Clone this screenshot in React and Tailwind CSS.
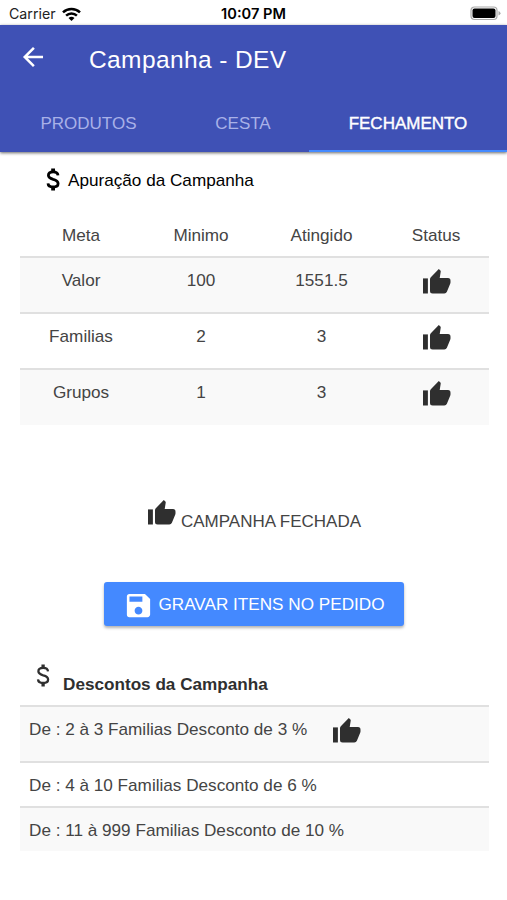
import { IoMdArrowBack } from "react-icons/io";
import { MdSave } from "react-icons/md";

const tabs = [
  { label: "PRODUTOS", cls: "w-[177px] text-[#a9b1e8]" },
  { label: "CESTA", cls: "w-[132px] text-[#a9b1e8]" },
  { label: "FECHAMENTO", cls: "w-[198px] text-white border-[#448aff]", active: true },
];

const metas = [
  { meta: "Valor", minimo: "100", atingido: "1551.5" },
  { meta: "Familias", minimo: "2", atingido: "3" },
  { meta: "Grupos", minimo: "1", atingido: "3" },
];

const descontos = [
  { text: "De : 2 à 3 Familias Desconto de 3 %", ok: true },
  { text: "De : 4 à 10 Familias Desconto de 6 %" },
  { text: "De : 11 à 999 Familias Desconto de 10 %" },
];

function ThumbUp({ className = "" }) {
  return (
    <svg className={`w-[28px] h-[25px] shrink-0 text-[#2f2f2f] ${className}`} viewBox="0 0 28 25" fill="currentColor">
      <path d="M0 9.4h4.9v15.1H0z" />
      <path d="M15.8 0.1 17.4 1.5Q17.9 2 17.7 2.8L16.7 9.1H25Q27.5 9.1 27.5 11.7V13.3Q27.5 14 27.2 14.7L23.9 22.7Q23.2 24.5 21.3 24.5H9.6Q7 24.5 7 22V10.3Q7 9.1 7.8 8.2z" />
    </svg>
  );
}

function Dollar({ weight, className = "" }) {
  return (
    <svg className={`w-[14px] h-[23px] shrink-0 ${className}`} viewBox="0 0 14 23" fill="none" stroke="currentColor" strokeWidth={weight}>
      <path d="M12 7.3C11.7 4.9 9.9 3.9 7.2 3.9C4.4 3.9 2.4 5.1 2.4 7.3C2.4 9.6 4.3 10.5 7.2 11.3C10.4 12.1 12.1 13.2 12.1 15.5C12.1 17.8 10.1 19 7.2 19C4.1 19 2.2 17.9 2 15.4" />
      <path d="M7.1 0.4V4M7.1 19v3.6" strokeWidth={weight + 1} />
    </svg>
  );
}

function StatusBar() {
  return (
    <div className="h-[25px] grid grid-cols-3 items-center pl-[9px] pr-[6px] pt-[2px] text-[#222] font-['Inter','Liberation_Sans',sans-serif]">
      <div className="flex items-center gap-[6px]">
        <span className="text-[14.2px]">Carrier</span>
        <svg width="19" height="15" viewBox="0 0 19 15" fill="none" stroke="#000" strokeWidth="2.5">
          <path d="M1 5.3a12.3 12.3 0 0 1 17 0" />
          <path d="M4.1 8.6a7.8 7.8 0 0 1 10.8 0" />
          <path d="M6.5 11.1a4.3 4.3 0 0 1 6 0L9.5 14z" fill="#000" stroke="none" />
        </svg>
      </div>
      <span className="-ml-[3px] text-center font-semibold text-[14.6px] text-black whitespace-nowrap">10:07 PM</span>
      <svg className="justify-self-end mb-[2px]" width="31" height="15" viewBox="0 0 31 15">
        <rect x="1" y="1" width="26" height="12.5" rx="3.5" fill="#fff" stroke="#aaa" strokeWidth="1.2" />
        <rect x="2.5" y="2.5" width="23" height="9.5" rx="2" fill="#000" />
        <path d="M28.5 5v4.5q2-.7 2-2.25T28.5 5z" fill="#aaa" />
      </svg>
    </div>
  );
}

function Header() {
  return (
    <header className="h-[127px] bg-[#3f51b5] text-white flex flex-col shadow-[0_1px_3px_rgba(0,0,0,0.6)]">
      <div className="h-[70px] flex items-center pl-[18px]">
        <IoMdArrowBack className="w-[30px] h-[30px] mb-[6px]" />
        <h1 className="ml-[41px] text-[24.5px] tracking-[0.4px]">Campanha - DEV</h1>
      </div>
      <nav className="flex flex-1">
        {tabs.map((tab) => (
          <div key={tab.label} className={`flex items-center justify-center pt-[2px] text-[17px] border-b-[2px] ${tab.active ? "[-webkit-text-stroke:0.4px_white]" : "border-transparent"} ${tab.cls}`}>
            {tab.label}
          </div>
        ))}
      </nav>
    </header>
  );
}

export default function App() {
  return (
    <div className="w-[507px] h-[900px] bg-white overflow-hidden text-[17.15px] leading-[24px] text-[#444] font-['Liberation_Sans',Arial,sans-serif]">
      <StatusBar />
      <Header />

      <main className="pl-[20px] pr-[18px]">
        <div className="flex items-center h-[55px] pl-[26px] text-black">
          <Dollar weight={2.8} />
          <span className="pl-[8px]">Apuração da Campanha</span>
        </div>

        <table className="w-[469px] table-fixed text-center">
          <colgroup>
            <col className="w-[122px]" />
            <col className="w-[118px]" />
            <col className="w-[123px]" />
            <col className="w-[106px]" />
          </colgroup>
          <thead>
            <tr className="h-[50px]">
              {["Meta", "Minimo", "Atingido", "Status"].map((h) => (
                <th key={h} className="font-normal pt-[7px]">{h}</th>
              ))}
            </tr>
          </thead>
          <tbody>
            {metas.map((row) => (
              <tr key={row.meta} className="h-[56px] border-t-2 border-[#e0e0e0] odd:bg-[#f9f9f9] align-top">
                <td className="pt-[10px]">{row.meta}</td>
                <td className="pt-[10px]">{row.minimo}</td>
                <td className="pt-[10px]">{row.atingido}</td>
                <td className="pt-[11px] pl-[1px]">
                  <ThumbUp className="mx-auto" />
                </td>
              </tr>
            ))}
          </tbody>
        </table>

        <div className="mt-[74px] flex justify-center items-start gap-[5px]">
          <ThumbUp className="mt-[1px]" />
          <span className="pt-[11px] text-[17px]">CAMPANHA FECHADA</span>
        </div>

        <button className="mt-[48px] ml-[84px] w-[300px] h-[44px] flex items-center justify-center gap-[4px] rounded-[3px] bg-[#4489ff] text-white shadow-[0_2px_3px_rgba(0,0,0,0.3)]">
          <MdSave className="w-[31px] h-[31px] mt-[2px]" />
          <span>GRAVAR ITENS NO PEDIDO</span>
        </button>

        <section className="mt-[33px]">
          <div className="flex items-start h-[46px] pl-[16px] text-[#2f2f2f]">
            <Dollar weight={2.3} className="mt-[5px]" />
            <h2 className="pl-[13px] pt-[13px] font-bold">Descontos da Campanha</h2>
          </div>
          {descontos.map((d) => (
            <div key={d.text} className={`flex items-start pl-[9px] pt-[10px] border-t-2 border-[#e0e0e0] even:bg-[#f9f9f9] ${d.ok ? "h-[56px]" : "h-[45px]"}`}>
              <span>{d.text}</span>
              {d.ok && <ThumbUp className="ml-[26px] mt-[1px]" />}
            </div>
          ))}
        </section>
      </main>
    </div>
  );
}
